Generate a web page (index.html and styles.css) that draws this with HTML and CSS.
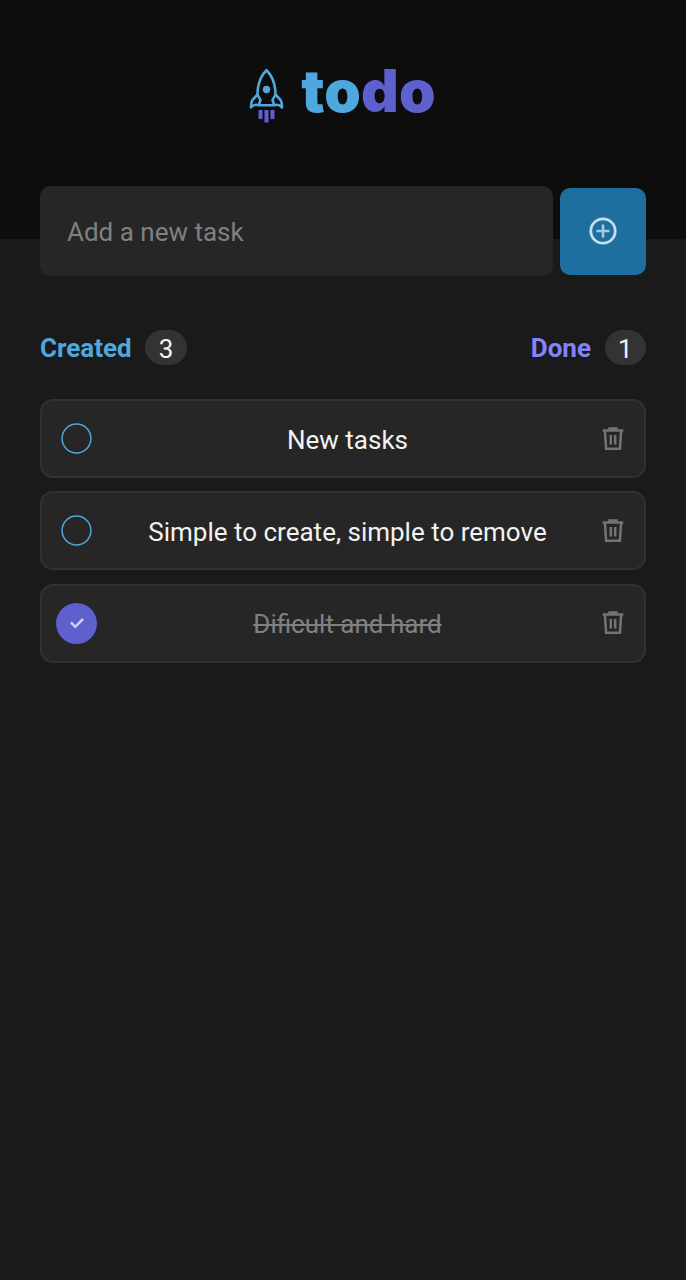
FILE: index.html
```html
<!DOCTYPE html>
<html lang="en">
<head>
<meta charset="utf-8">
<title>todo</title>
<link rel="stylesheet" href="styles.css">
</head>
<body>
<svg width="0" height="0" class="defs">
  <symbol id="trash" viewBox="0 0 22 26">
    <path fill="none" stroke="currentColor" stroke-width="2.5" d="M.7 4.6H21.3M7.500 4V2.400H14.500V4M2.900 5L4.100 22.700H17.900L19.100 5"/>
    <path fill="none" stroke="currentColor" stroke-width="2.500" d="M8.800 9V18.400M13.200 9V18.400"/>
  </symbol>
  <symbol id="ring" viewBox="0 0 31 31">
    <circle cx="15.500" cy="15.500" r="14.400" fill="none" stroke="#4ea8de" stroke-width="1.500"/>
  </symbol>
</svg>
<header class="header">
  <svg class="rocket" viewBox="0 0 36 56">
    <g fill="none" stroke="#4ea8de" stroke-width="2.600" stroke-linejoin="round">
      <path d="M17.500 2.200C13.500 6 9.800 14 8.800 21L8.500 26.500L3.300 32.200Q1.800 34.500 2 39.500Q5.500 35.500 9.500 37.300H25.500Q29.500 35.500 33 39.500Q33.200 34.500 31.700 32.200L26.500 26.500L26.200 21C25.200 14 21.500 6 17.500 2.200Z"/>
      <path d="M8.500 26.500L11.500 32L9.800 37M26.500 26.500L23.500 32L25.200 37"/>
    </g>
    <circle cx="17.500" cy="21.500" r="3.700" fill="#4ea8de"/>
    <path stroke="#5e60ce" stroke-width="4" d="M11.500 42V51M17.500 42V54.500M23.500 42V51"/>
  </svg>
  <h1 class="brand">to<span class="brand-accent">do</span></h1>
</header>
<main class="content">
  <form class="new-task">
    <input class="task-input" type="text" placeholder="Add a new task">
    <button class="add" type="button" aria-label="Add">
      <svg class="plus" viewBox="0 0 28 28" fill="none"><circle cx="14" cy="14" r="12.200" stroke="#c5dfef" stroke-width="2.800"/><path d="M14 7.500V20.500M7.500 14H20.500" stroke="#a5cbe2" stroke-width="2.600"/></svg>
    </button>
  </form>
  <section class="summary">
    <div class="stat created">Created <span class="count">3</span></div>
    <div class="stat done">Done <span class="count">1</span></div>
  </section>
  <ul class="tasks">
    <li class="task"><svg class="check"><use href="#ring"/></svg><p class="label">New tasks</p><svg class="trash"><use href="#trash"/></svg></li>
    <li class="task"><svg class="check"><use href="#ring"/></svg><p class="label">Simple to create, simple to remove</p><svg class="trash"><use href="#trash"/></svg></li>
    <li class="task complete"><span class="check"><svg class="tick" viewBox="0 0 16 12"><path d="M2 5.500L6.300 9.800L14 2" fill="none" stroke="#d0cef4" stroke-width="2.500"/></svg></span><p class="label">Dificult and hard</p><svg class="trash"><use href="#trash"/></svg></li>
  </ul>
</main>
</body>
</html>
```
FILE: styles.css
```css
* { box-sizing: border-box; margin: 0; padding: 0; }
body { min-height: 1280px; background: #1a1a1a; color: #f2f2f2; font: 26px/32px Roboto, sans-serif; }
.defs { display: block; }
.header { display: flex; justify-content: center; align-items: flex-start; gap: 16px; height: 239px; padding: 68px 1px 0 0; background: #0d0d0d; }
.rocket { width: 36px; height: 56px; }
.brand { font: 900 58.5px/56px Inter, sans-serif; letter-spacing: 0.2px; color: #4ea8de; margin-top: -5px; }
.brand-accent { color: #5e60ce; }
.content { padding: 0 40px; margin-top: -53px; }
.new-task { display: flex; align-items: center; gap: 7px; }
.task-input { flex: 1; min-width: 0; height: 90px; padding: 2px 27px 0; border: 0; border-radius: 10px; background: #262626; color: #f2f2f2; font: inherit; }
.task-input::placeholder { color: #808080; opacity: 1; }
.add { display: flex; align-items: center; justify-content: center; width: 86.5px; height: 87px; border: 0; border-radius: 10px; background: #1e6f9f; }
.plus { width: 28px; height: 28px; }
.summary { display: flex; justify-content: space-between; margin-top: 54px; }
.stat { display: flex; align-items: center; gap: 13.5px; font-weight: 700; line-height: 34px; }
.created { color: #4ea8de; }
.done { color: #8284fa; }
.count { width: 41.5px; height: 35px; padding-top: 2px; border-radius: 18px; background: #333; color: #f2f2f2; font-weight: 400; text-align: center; }
.tasks { display: grid; gap: 13.4px; margin-top: 34px; list-style: none; }
.task { display: flex; align-items: center; height: 79px; padding: 0 20px 0 14px; border: 2px solid #313131; border-radius: 13px; background: #262626; }
.check { display: flex; align-items: center; justify-content: center; width: 31px; height: 31px; margin: 0 5px; flex: none; }
.label { flex: 1; text-align: center; padding: 2px 4px 0 0; }
.trash { width: 22px; height: 26px; color: #747474; }
.complete .check { width: 41px; height: 41px; margin: 0; border-radius: 50%; background: #5e60ce; }
.complete .label { color: #808080; text-decoration: line-through; }
.tick { width: 16px; height: 12px; }
```
